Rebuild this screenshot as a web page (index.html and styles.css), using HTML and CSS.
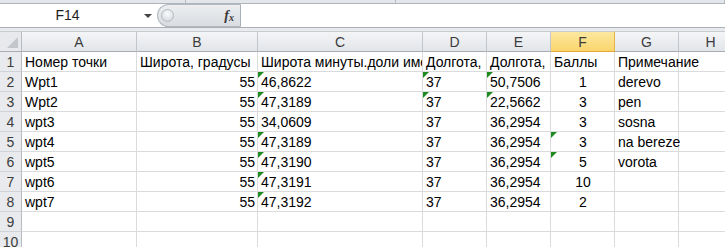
FILE: index.html
```html
<!DOCTYPE html>
<html lang="ru">
<head>
    <meta charset="UTF-8">
    <title>Точки</title>
    <link rel="stylesheet" href="styles.css">
</head>
<body>
    <div class="ribbon-edge">
        <span class="edge-part first"></span>
        <span class="edge-part second"></span>
        <span class="edge-part"></span>
    </div>
    <div class="formula-bar">
        <div class="name-box">F14<span class="drop-arrow"></span></div>
        <div class="fx-pill"><span class="knob"></span><span class="fx">f<sub>x</sub></span></div>
        <div class="formula-input"></div>
    </div>
    <div class="gap"></div>
    <div class="sheet">
        <div class="hd corner"></div>
        <div class="hd col">A</div>
        <div class="hd col">B</div>
        <div class="hd col">C</div>
        <div class="hd col">D</div>
        <div class="hd col">E</div>
        <div class="hd col selected">F</div>
        <div class="hd col">G</div>
        <div class="hd col">H</div>

        <div class="hd row">1</div>
        <div class="cell">Номер точки</div>
        <div class="cell">Широта, градусы</div>
        <div class="cell">Широта минуты.доли имени</div>
        <div class="cell">Долгота, градусы</div>
        <div class="cell">Долгота, минуты</div>
        <div class="cell">Баллы</div>
        <div class="cell spill">Примечание</div>
        <div class="cell"></div>

        <div class="hd row">2</div>
        <div class="cell">Wpt1</div>
        <div class="cell num">55</div>
        <div class="cell flag">46,8622</div>
        <div class="cell flag">37</div>
        <div class="cell flag">50,7506</div>
        <div class="cell mid">1</div>
        <div class="cell">derevo</div>
        <div class="cell"></div>

        <div class="hd row">3</div>
        <div class="cell">Wpt2</div>
        <div class="cell num">55</div>
        <div class="cell flag">47,3189</div>
        <div class="cell flag">37</div>
        <div class="cell flag">22,5662</div>
        <div class="cell mid">3</div>
        <div class="cell">pen</div>
        <div class="cell"></div>

        <div class="hd row">4</div>
        <div class="cell">wpt3</div>
        <div class="cell num">55</div>
        <div class="cell">34,0609</div>
        <div class="cell">37</div>
        <div class="cell">36,2954</div>
        <div class="cell mid">3</div>
        <div class="cell">sosna</div>
        <div class="cell"></div>

        <div class="hd row">5</div>
        <div class="cell">wpt4</div>
        <div class="cell num">55</div>
        <div class="cell flag">47,3189</div>
        <div class="cell">37</div>
        <div class="cell">36,2954</div>
        <div class="cell mid flag">3</div>
        <div class="cell spill">na bereze</div>
        <div class="cell"></div>

        <div class="hd row">6</div>
        <div class="cell">wpt5</div>
        <div class="cell num">55</div>
        <div class="cell flag">47,3190</div>
        <div class="cell">37</div>
        <div class="cell">36,2954</div>
        <div class="cell mid flag">5</div>
        <div class="cell">vorota</div>
        <div class="cell"></div>

        <div class="hd row">7</div>
        <div class="cell">wpt6</div>
        <div class="cell num">55</div>
        <div class="cell flag">47,3191</div>
        <div class="cell">37</div>
        <div class="cell">36,2954</div>
        <div class="cell mid">10</div>
        <div class="cell"></div>
        <div class="cell"></div>

        <div class="hd row">8</div>
        <div class="cell">wpt7</div>
        <div class="cell num">55</div>
        <div class="cell flag">47,3192</div>
        <div class="cell">37</div>
        <div class="cell">36,2954</div>
        <div class="cell mid">2</div>
        <div class="cell"></div>
        <div class="cell"></div>

        <div class="hd row">9</div>
        <div class="cell"></div>
        <div class="cell"></div>
        <div class="cell"></div>
        <div class="cell"></div>
        <div class="cell"></div>
        <div class="cell"></div>
        <div class="cell"></div>
        <div class="cell"></div>

        <div class="hd row">10</div>
        <div class="cell"></div>
        <div class="cell"></div>
        <div class="cell"></div>
        <div class="cell"></div>
        <div class="cell"></div>
        <div class="cell"></div>
        <div class="cell"></div>
        <div class="cell"></div>
    </div>
</body>
</html>
```

FILE: styles.css
```css
body {
    margin: 0;
    width: 725px;
    height: 247px;
    overflow: hidden;
    background-color: #fff;
    font-family: "Liberation Sans", Arial, sans-serif;
    font-size: 14px;
    color: #000;
}
.ribbon-edge {
    height: 3px;
    display: flex;
    background-color: #e3e6ea;
    border-bottom: 1px solid #aeb4bb;
}
.edge-part {
    flex: 1;
    border-right: 1px solid #b7bcc3;
}
.edge-part.first {
    flex: 0 0 185px;
}
.edge-part.second {
    flex: 0 0 209px;
}
.formula-bar {
    height: 23px;
    display: flex;
    background-color: #fff;
    border-bottom: 1px solid #a9afb7;
}
.name-box {
    width: 157px;
    position: relative;
    text-align: center;
    line-height: 23px;
    padding-right: 22px;
    box-sizing: border-box;
    color: #1e1e1e;
}
.drop-arrow {
    position: absolute;
    left: 144px;
    top: 10px;
    border-left: 4px solid transparent;
    border-right: 4px solid transparent;
    border-top: 4px solid #444;
}
.fx-pill {
    width: 84px;
    display: flex;
    align-items: center;
    justify-content: space-between;
    box-sizing: border-box;
    padding: 0 6px 0 3px;
    background: linear-gradient(#eceef1, #d9dce0);
    border: 1px solid #b4b9c0;
    border-right-color: #a9afb7;
    border-radius: 12px 0 0 12px;
}
.knob {
    width: 11px;
    height: 11px;
    border-radius: 50%;
    background: radial-gradient(circle at 50% 35%, #fbfbfc, #cfd3d8);
    border: 1px solid #b5bac1;
}
.fx {
    font-family: "Liberation Serif", serif;
    font-style: italic;
    font-weight: bold;
    font-size: 14px;
    color: #3a3a3a;
}
.fx sub {
    font-size: 10px;
    vertical-align: -1px;
}
.formula-input {
    flex: 1;
}
.gap {
    height: 3px;
    background-color: #e9ebee;
}
.sheet {
    display: grid;
    grid-template-columns: 22px 115px 121px 165px 64px 64px 64px 64px 64px;
    grid-auto-rows: 20px;
    grid-template-rows: 21px;
}
.hd {
    box-sizing: border-box;
    color: #3c3c3c;
    text-align: center;
    font-size: 14px;
    line-height: 20px;
}
.hd.col {
    background: linear-gradient(#f4f5f7, #e2e5e9);
    border-top: 1px solid #c9cdd2;
    border-right: 1px solid #c2c6cc;
    border-bottom: 1px solid #a9adb3;
}
.hd.col.selected {
    background: linear-gradient(#fde8a0, #f9d56d);
    border-right-color: #e2b44c;
    border-bottom-color: #e7a630;
}
.hd.corner {
    position: relative;
    background-color: #e7e9ec;
    border-top: 1px solid #c9cdd2;
    border-right: 1px solid #b9bdc3;
    border-bottom: 1px solid #a9adb3;
}
.hd.corner::after {
    content: '';
    position: absolute;
    right: 3px;
    bottom: 3px;
    width: 11px;
    height: 11px;
    background-color: #c3c7cc;
    clip-path: polygon(100% 0, 100% 100%, 0 100%);
}
.hd.row {
    background-color: #e8eaed;
    border-right: 1px solid #b9bdc3;
    border-bottom: 1px solid #cfd3d8;
}
.cell {
    position: relative;
    box-sizing: border-box;
    border-right: 1px solid #d9dbdd;
    border-bottom: 1px solid #d9dbdd;
    padding: 0 2px 0 3px;
    line-height: 20px;
    white-space: nowrap;
    overflow: hidden;
}
.cell.spill {
    overflow: visible;
    z-index: 1;
}
.num {
    text-align: right;
}
.mid {
    text-align: center;
}
.flag::before {
    content: '';
    position: absolute;
    left: 0;
    top: 0;
    width: 6px;
    height: 6px;
    background-color: #1f8a1f;
    clip-path: polygon(0 0, 100% 0, 0 100%);
}
```
